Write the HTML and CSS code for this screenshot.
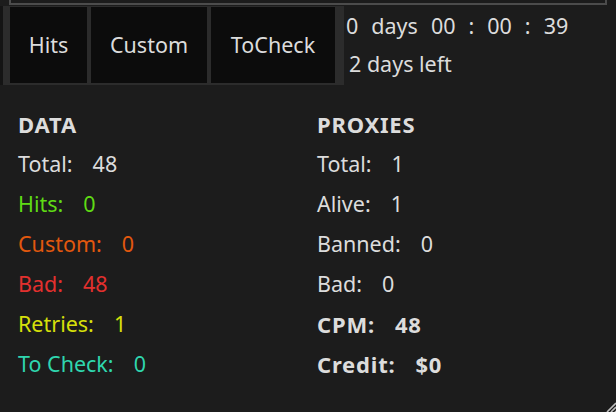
FILE: index.html
```html
<!DOCTYPE html>
<html lang="en">
<head>
    <meta charset="UTF-8">
    <title>Runner Stats</title>
    <link rel="stylesheet" href="styles.css">
</head>
<body>
    <div class="progress"></div>

    <div class="top">
        <div class="tabs">
            <div class="tab tab-hits">Hits</div>
            <div class="tab tab-custom">Custom</div>
            <div class="tab tab-check">ToCheck</div>
        </div>
        <div class="timer">
            <div class="elapsed">
                <span>0</span><span>days</span><span>00</span><span>:</span><span>00</span><span>:</span><span>39</span>
            </div>
            <div class="left">2 days left</div>
        </div>
    </div>

    <div class="stats">
        <div class="col">
            <div class="head">DATA</div>
            <div class="row"><span>Total:</span><span>48</span></div>
            <div class="row hits"><span>Hits:</span><span>0</span></div>
            <div class="row custom"><span>Custom:</span><span>0</span></div>
            <div class="row bad"><span>Bad:</span><span>48</span></div>
            <div class="row retries"><span>Retries:</span><span>1</span></div>
            <div class="row tocheck"><span>To Check:</span><span>0</span></div>
        </div>
        <div class="col">
            <div class="head">PROXIES</div>
            <div class="row"><span>Total:</span><span>1</span></div>
            <div class="row"><span>Alive:</span><span>1</span></div>
            <div class="row"><span>Banned:</span><span>0</span></div>
            <div class="row"><span>Bad:</span><span>0</span></div>
            <div class="row strong"><span>CPM:</span><span>48</span></div>
            <div class="row strong"><span>Credit:</span><span>$0</span></div>
        </div>
    </div>

    <svg class="grip" width="12" height="12" viewBox="0 0 12 12">
        <path d="M12 3 L3 12 M12 7 L7 12 M12 11 L11 12" stroke="#bdbdbd" stroke-width="1.6"/>
    </svg>
</body>
</html>
```

FILE: styles.css
```css
body {
    margin: 0;
    width: 616px;
    height: 412px;
    overflow: hidden;
    position: relative;
    background-color: #1c1c1c;
    color: #dcdcdc;
    font-family: "Noto Sans", "Open Sans", sans-serif;
    font-size: 21.5px;
}
.progress {
    height: 3px;
    width: 594px;
    margin-left: 9px;
    border: 2px solid #4c4c4c;
    border-top: none;
}
.top {
    display: flex;
    margin-top: 1px;
}
.tabs {
    display: flex;
    gap: 4px;
    width: 330px;
    height: 76px;
    padding: 1px 4px 2px 7px;
    border-left: 3px solid #141414;
    background-color: #2c2c2c;
}
.tab {
    display: flex;
    align-items: center;
    justify-content: center;
    padding-bottom: 2px;
    background-color: #0c0c0c;
    color: #dcdcdc;
}
.tab-hits {
    width: 77px;
}
.tab-custom {
    width: 116px;
}
.tab-check {
    width: 124px;
}
.timer {
    padding: 2px 0 0 2px;
}
.elapsed {
    display: flex;
    gap: 13px;
    line-height: 36px;
}
.left {
    padding-left: 3px;
    line-height: 40px;
}
.stats {
    display: flex;
    padding: 19px 0 0 18px;
}
.col {
    width: 300px;
}
.head {
    font-weight: bold;
    font-size: 22px;
    letter-spacing: 0.8px;
    line-height: 40px;
}
.row {
    display: flex;
    gap: 20px;
    line-height: 40px;
}
.hits {
    color: #5fdb14;
}
.custom {
    color: #e2580e;
}
.bad {
    color: #e3302e;
}
.retries {
    color: #d7e00a;
}
.tocheck {
    color: #2fd6ae;
}
.strong {
    font-weight: bold;
    font-size: 22px;
    letter-spacing: 0.8px;
}
.grip {
    position: absolute;
    right: 0;
    bottom: 0;
}
```
